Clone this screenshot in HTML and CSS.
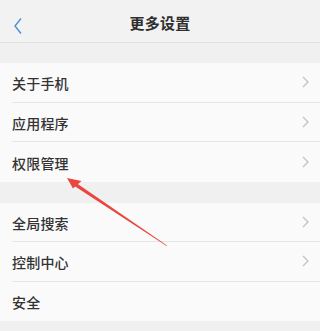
FILE: index.html
```html
<!DOCTYPE html>
<html lang="zh">
<head>
<meta charset="utf-8">
<link rel="stylesheet" href="styles.css">
</head>
<body>
<div class="screen">
  <header class="topbar">
    <svg class="back" width="10" height="18" viewBox="0 0 10 18"><path d="M8 1.5 L2 9 L8 16.5" fill="none" stroke="#4a8fd6" stroke-width="1.4"/></svg>
    <div class="title">更多设置</div>
  </header>
  <div class="gap first"></div>
  <ul class="group">
    <li class="row"><span>关于手机</span><svg class="chev" width="7" height="12" viewBox="0 0 7 12"><path d="M1 1 L6 6 L1 11" fill="none" stroke="#c2c2c2" stroke-width="1.3"/></svg></li>
    <li class="row"><span>应用程序</span><svg class="chev" width="7" height="12" viewBox="0 0 7 12"><path d="M1 1 L6 6 L1 11" fill="none" stroke="#c2c2c2" stroke-width="1.3"/></svg></li>
    <li class="row last"><span>权限管理</span><svg class="chev" width="7" height="12" viewBox="0 0 7 12"><path d="M1 1 L6 6 L1 11" fill="none" stroke="#c2c2c2" stroke-width="1.3"/></svg></li>
  </ul>
  <div class="gap"></div>
  <ul class="group">
    <li class="row"><span>全局搜索</span><svg class="chev" width="7" height="12" viewBox="0 0 7 12"><path d="M1 1 L6 6 L1 11" fill="none" stroke="#c2c2c2" stroke-width="1.3"/></svg></li>
    <li class="row"><span>控制中心</span><svg class="chev" width="7" height="12" viewBox="0 0 7 12"><path d="M1 1 L6 6 L1 11" fill="none" stroke="#c2c2c2" stroke-width="1.3"/></svg></li>
    <li class="row last"><span>安全</span></li>
  </ul>
  <svg class="arrow" width="300" height="331" viewBox="0 0 300 331">
    <path d="M167 245.5 L77 183.5 L75.2 186.6 L166.6 246 Z" fill="#e8463f"/>
    <path d="M67 178 L81.5 181 L73 188.5 Z" fill="#e8463f"/>
  </svg>
</div>
</body>
</html>
```

FILE: styles.css
```css
html, body {
  margin: 0;
  padding: 0;
  background: #f0f0f0;
}
body {
  font-family: "Noto Sans CJK SC", "Noto Sans", sans-serif;
  color: #333;
}
.screen {
  position: relative;
  width: 100%;
  height: 331px;
  overflow: hidden;
  background: #f0f0f0;
}
.topbar {
  position: relative;
  height: 43px;
  background: #f2f2f2;
  border-bottom: 1px solid #e2e2e2;
  display: flex;
  align-items: center;
  justify-content: center;
  padding-top: 2px;
  box-sizing: border-box;
}
.back {
  position: absolute;
  left: 13px;
  top: 17px;
}
.title {
  font-size: 15px;
  font-weight: 600;
  color: #2e2e2e;
  letter-spacing: 0.3px;
}
.gap {
  height: 21px;
  background: #f0f0f0;
}
.gap.first {
  height: 20px;
}
.group {
  list-style: none;
  margin: 0;
  padding: 0;
  background: #fafafa;
}
.row {
  height: 39.5px;
  margin-left: 12px;
  padding-right: 10px;
  display: flex;
  align-items: center;
  justify-content: space-between;
  border-bottom: 1px solid #e6e6e6;
  box-sizing: border-box;
  font-size: 14px;
  font-weight: 500;
  color: #333;
}
.row span {
  padding-top: 2px;
  letter-spacing: 0.2px;
}
.row.last {
  border-bottom: none;
}
.chev {
  display: block;
  margin-right: 1px;
}
.arrow {
  position: absolute;
  left: 0;
  top: 0;
  pointer-events: none;
}
```
